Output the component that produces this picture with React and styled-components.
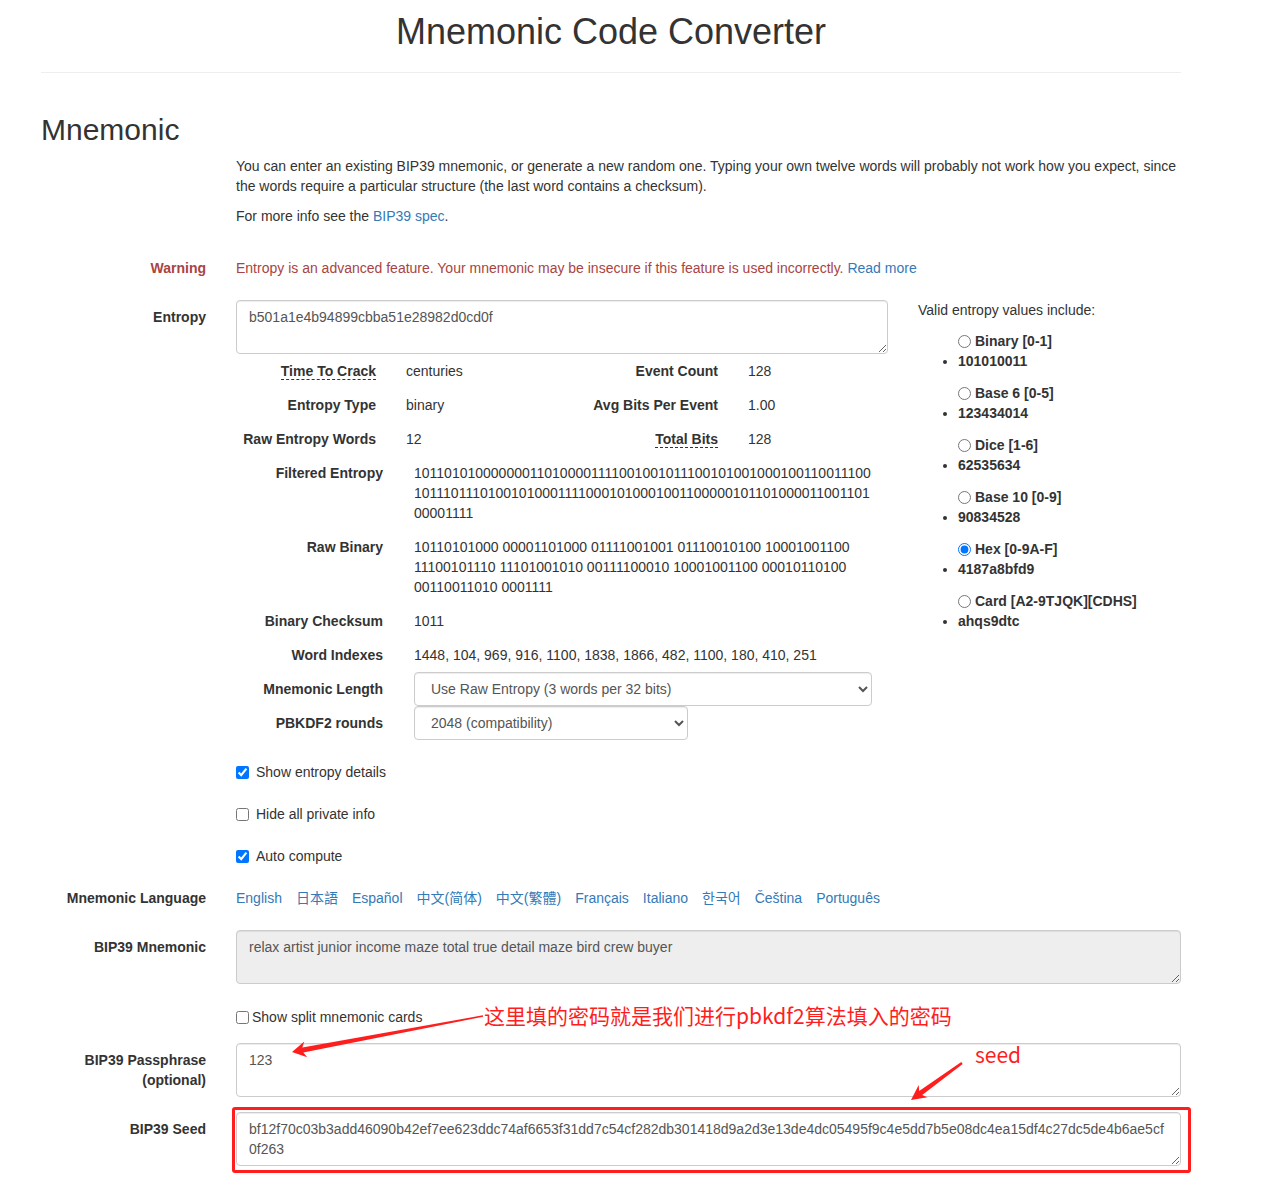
import React from 'react'
import styled, { createGlobalStyle } from 'styled-components'

const GlobalStyle = createGlobalStyle`
  * { box-sizing: border-box; }
  body {
    margin: 0;
    font-family: "Liberation Sans", Arial, "Noto Sans CJK SC", sans-serif;
    font-size: 14px;
    line-height: 20px;
    color: #333;
    background: #fff;
  }
`

const Page = styled.div`
  position: relative;
  width: 1140px;
  margin-left: 41px;
  padding-bottom: 20px;
`

const Title = styled.h1`
  margin: 0;
  padding-top: 12px;
  font-size: 36px;
  line-height: 40px;
  font-weight: normal;
  text-align: center;
`

const Rule = styled.hr`
  margin: 20px 0 40px;
  border: 0;
  border-top: 1px solid #eee;
`

const Heading = styled.h2`
  margin: 0 0 10px;
  font-size: 30px;
  line-height: 33px;
  font-weight: normal;
`

const FormRow = styled.div`
  display: grid;
  grid-template-columns: 165px 945px;
  column-gap: 30px;
  margin-bottom: 15px;
`

const FieldLabel = styled.div`
  text-align: right;
  font-weight: bold;
  padding-top: 7px;
  color: ${(props) => props.$color || '#333'};
`

const Para = styled.p`
  margin: 0 0 10px;
`

const Link = styled.a`
  color: #337ab7;
  text-decoration: none;
`

const Static = styled.div`
  padding: 7px 0;
  color: ${(props) => props.$color || '#333'};
`

const TextBox = styled.textarea`
  display: block;
  width: 100%;
  height: 54px;
  padding: 6px 12px;
  font: inherit;
  line-height: 20px;
  color: #555;
  background: ${(props) => (props.$grey ? '#eee' : '#fff')};
  border: 1px solid #ccc;
  border-radius: 4px;
  box-shadow: inset 0 1px 1px rgba(0, 0, 0, 0.075);
  outline: none;
`

const EntropyLayout = styled.div`
  display: grid;
  grid-template-columns: 652px 263px;
  column-gap: 30px;
`

const StatsGrid = styled.div`
  display: grid;
  grid-template-columns: 140px 142px 140px 1fr;
  column-gap: 30px;
  grid-auto-rows: 34px;
  align-items: center;
`

const StatKey = styled.div`
  text-align: right;
  font-weight: bold;
`

const Dashed = styled.span`
  border-bottom: 1px dashed #333;
`

const InfoRow = styled.div`
  display: grid;
  grid-template-columns: 147px 474px;
  column-gap: 31px;
`

const InfoKey = styled.div`
  text-align: right;
  font-weight: bold;
  padding-top: 7px;
`

const InfoValue = styled.div`
  padding: ${(props) => (props.$flush ? '0' : '7px 0')};
  max-width: ${(props) => (props.$breakAll ? '460px' : 'none')};
  word-break: ${(props) => (props.$breakAll ? 'break-all' : 'normal')};
`

const Select = styled.select`
  display: block;
  width: ${(props) => props.$w}px;
  height: 34px;
  padding: 6px 12px;
  font: inherit;
  color: #555;
  background: #fff;
  border: 1px solid #ccc;
  border-radius: 4px;
  box-shadow: inset 0 1px 1px rgba(0, 0, 0, 0.075);
  outline: none;
`

const OptionList = styled.div`
  padding-left: 40px;
  padding-top: 1px;
`

const OptionLabel = styled.label`
  display: flex;
  align-items: center;
  font-weight: bold;
`

const Radio = styled.input`
  width: 13px;
  height: 13px;
  margin: 0 4px 0 0;
`

const Sample = styled.ul`
  margin: 0 0 12px;
  padding: 0;
  list-style: disc;
  font-weight: bold;
`

const CheckLine = styled.label`
  display: flex;
  align-items: center;
  padding: ${(props) => (props.$tight ? '8px 0 1px' : '7px 0 0')};
  min-height: 27px;
`

const Checkbox = styled.input`
  width: 13px;
  height: 13px;
  margin: 0 ${(props) => (props.$tight ? 3 : 7)}px 0 0;
`

const Languages = styled.div`
  display: flex;
  gap: 14px;
  padding: 7px 0;
`

const SeedFrame = styled.div`
  position: relative;
`

const Highlight = styled.div`
  position: absolute;
  inset: -5px -10px -7px -4px;
  border: 3px solid #ff1e1e;
  border-radius: 3px;
  pointer-events: none;
`

const Note = styled.div`
  position: absolute;
  left: ${(props) => props.$x}px;
  top: ${(props) => props.$y}px;
  font-family: "Noto Sans CJK SC", "Noto Sans", sans-serif;
  font-size: 21px;
  line-height: 24px;
  color: #ff1e1e;
  white-space: nowrap;
`

const Arrows = styled.svg`
  position: absolute;
  left: -41px;
  top: 0;
  pointer-events: none;
`

const stats = [
  ['Time To Crack', 'centuries', 'Event Count', '128', true, false],
  ['Entropy Type', 'binary', 'Avg Bits Per Event', '1.00', false, false],
  ['Raw Entropy Words', '12', 'Total Bits', '128', false, true],
]

const entropyOptions = [
  ['Binary [0-1]', '101010011'],
  ['Base 6 [0-5]', '123434014'],
  ['Dice [1-6]', '62535634'],
  ['Base 10 [0-9]', '90834528'],
  ['Hex [0-9A-F]', '4187a8bfd9'],
  ['Card [A2-9TJQK][CDHS]', 'ahqs9dtc'],
]

const languages = ['English', '日本語', 'Español', '中文(简体)', '中文(繁體)', 'Français', 'Italiano', '한국어', 'Čeština', 'Português']

const groups = ['10110101000', '00001101000', '01111001001', '01110010100', '10001001100', '11100101110',
  '11101001010', '00111100010', '10001001100', '00010110100', '00110011010', '0001111']

// arrow polygon: thin tail widening to a notched head
function arrowPoints([tx, ty], [px, py], head, wing, neck, tailW) {
  const dx = px - tx
  const dy = py - ty
  const len = Math.hypot(dx, dy)
  const ux = dx / len
  const uy = dy / len
  const nx = -uy
  const ny = ux
  const at = (back, side) => [px - ux * back + nx * side, py - uy * back + ny * side]
  const pts = [
    [tx + nx * tailW, ty + ny * tailW],
    at(head - 3, neck),
    at(head, wing),
    [px, py],
    at(head, -wing),
    at(head - 3, -neck),
    [tx - nx * tailW, ty - ny * tailW],
  ]
  return pts.map((p) => p.map((v) => v.toFixed(1)).join(',')).join(' ')
}

export default function App() {
  return (
    <Page>
      <GlobalStyle />
      <Title>Mnemonic Code Converter</Title>
      <Rule />
      <Heading>Mnemonic</Heading>

      <FormRow>
        <div />
        <div>
          <Para>
            You can enter an existing BIP39 mnemonic, or generate a new random one. Typing your own twelve words will
            probably not work how you expect, since the words require a particular structure (the last word contains a
            checksum).
          </Para>
          <Para>
            For more info see the <Link href="#">BIP39 spec</Link>.
          </Para>
        </div>
      </FormRow>

      <FormRow>
        <FieldLabel $color="#a94442">Warning</FieldLabel>
        <Static $color="#a94442">
          Entropy is an advanced feature. Your mnemonic may be insecure if this feature is used incorrectly.{' '}
          <Link href="#">Read more</Link>
        </Static>
      </FormRow>

      <FormRow>
        <FieldLabel>Entropy</FieldLabel>
        <EntropyLayout>
          <div>
            <TextBox rows={2} defaultValue="b501a1e4b94899cbba51e28982d0cd0f" />
            <StatsGrid>
              {stats.map(([k1, v1, k2, v2, dash1, dash2]) => (
                <React.Fragment key={k1}>
                  <StatKey>{dash1 ? <Dashed>{k1}</Dashed> : k1}</StatKey>
                  <div>{v1}</div>
                  <StatKey>{dash2 ? <Dashed>{k2}</Dashed> : k2}</StatKey>
                  <div>{v2}</div>
                </React.Fragment>
              ))}
            </StatsGrid>
            <InfoRow>
              <InfoKey>Filtered Entropy</InfoKey>
              <InfoValue $breakAll>{groups.join('')}</InfoValue>
            </InfoRow>
            <InfoRow>
              <InfoKey>Raw Binary</InfoKey>
              <InfoValue>{groups.join(' ')}</InfoValue>
            </InfoRow>
            <InfoRow>
              <InfoKey>Binary Checksum</InfoKey>
              <InfoValue>1011</InfoValue>
            </InfoRow>
            <InfoRow>
              <InfoKey>Word Indexes</InfoKey>
              <InfoValue>1448, 104, 969, 916, 1100, 1838, 1866, 482, 1100, 180, 410, 251</InfoValue>
            </InfoRow>
            <InfoRow>
              <InfoKey>Mnemonic Length</InfoKey>
              <InfoValue $flush>
                <Select $w={458} defaultValue="raw">
                  <option value="raw">Use Raw Entropy (3 words per 32 bits)</option>
                </Select>
              </InfoValue>
            </InfoRow>
            <InfoRow>
              <InfoKey>PBKDF2 rounds</InfoKey>
              <InfoValue $flush>
                <Select $w={274} defaultValue="2048">
                  <option value="2048">2048 (compatibility)</option>
                </Select>
              </InfoValue>
            </InfoRow>
          </div>
          <div>
            <Para>Valid entropy values include:</Para>
            <OptionList>
              {entropyOptions.map(([name, sample]) => (
                <div key={name}>
                  <OptionLabel>
                    <Radio type="radio" name="entropy-type" defaultChecked={name.startsWith('Hex')} />
                    {name}
                  </OptionLabel>
                  <Sample>
                    <li>{sample}</li>
                  </Sample>
                </div>
              ))}
            </OptionList>
          </div>
        </EntropyLayout>
      </FormRow>

      <FormRow>
        <div />
        <CheckLine>
          <Checkbox type="checkbox" defaultChecked />
          Show entropy details
        </CheckLine>
      </FormRow>
      <FormRow>
        <div />
        <CheckLine>
          <Checkbox type="checkbox" />
          Hide all private info
        </CheckLine>
      </FormRow>
      <FormRow>
        <div />
        <CheckLine>
          <Checkbox type="checkbox" defaultChecked />
          Auto compute
        </CheckLine>
      </FormRow>

      <FormRow>
        <FieldLabel>Mnemonic Language</FieldLabel>
        <Languages>
          {languages.map((lang) => (
            <Link key={lang} href="#">
              {lang}
            </Link>
          ))}
        </Languages>
      </FormRow>

      <FormRow>
        <FieldLabel>BIP39 Mnemonic</FieldLabel>
        <TextBox
          rows={2}
          readOnly
          $grey
          defaultValue="relax artist junior income maze total true detail maze bird crew buyer"
        />
      </FormRow>

      <FormRow>
        <div />
        <CheckLine $tight>
          <Checkbox type="checkbox" $tight />
          Show split mnemonic cards
        </CheckLine>
      </FormRow>

      <FormRow>
        <FieldLabel>
          BIP39 Passphrase
          <br />
          (optional)
        </FieldLabel>
        <TextBox rows={2} defaultValue="123" />
      </FormRow>

      <FormRow>
        <FieldLabel>BIP39 Seed</FieldLabel>
        <SeedFrame>
          <TextBox
            rows={2}
            readOnly
            defaultValue="bf12f70c03b3add46090b42ef7ee623ddc74af6653f31dd7c54cf282db301418d9a2d3e13de4dc05495f9c4e5dd7b5e08dc4ea15df4c27dc5de4b6ae5cf0f263"
          />
          <Highlight />
        </SeedFrame>
      </FormRow>

      <Note $x={443} $y={1003}>这里填的密码就是我们进行pbkdf2算法填入的密码</Note>
      <Note $x={934} $y={1042}>seed</Note>
      <Arrows width="1267" height="1179" viewBox="0 0 1267 1179">
        <polygon fill="#ff1e1e" points={arrowPoints([483, 1016], [292, 1052], 14, 8, 2.5, 0.7)} />
        <polygon fill="#ff1e1e" points={arrowPoints([962, 1063], [911, 1100], 15, 7.5, 2.5, 1.2)} />
      </Arrows>
    </Page>
  )
}
